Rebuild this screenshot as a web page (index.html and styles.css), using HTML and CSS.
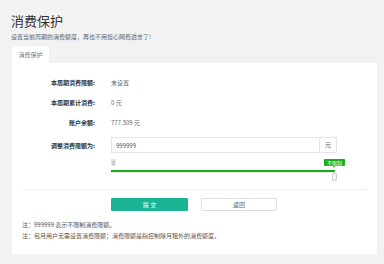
FILE: index.html
```html
<!DOCTYPE html>
<html lang="zh-CN">
<head>
    <meta charset="UTF-8">
    <meta name="viewport" content="width=device-width, initial-scale=1.0">
    <title>消费保护</title>
    <link rel="stylesheet" href="styles.css">
</head>
<body>
    <div class="page">
        <h1 class="title">消费保护</h1>
        <p class="subtitle">设置当前周期的消费额度，再也不用担心网费透支了!</p>

        <div class="tabs">
            <div class="tab active">消费保护</div>
        </div>

        <div class="panel">
            <div class="row">
                <div class="label">本周期消费限额:</div>
                <div class="value">未设置</div>
            </div>
            <div class="row">
                <div class="label">本周期累计消费:</div>
                <div class="value">0 元</div>
            </div>
            <div class="row">
                <div class="label">账户余额:</div>
                <div class="value">777.509 元</div>
            </div>
            <div class="row row-input">
                <div class="label">调整消费限额为:</div>
                <div class="input-group">
                    <input type="text" class="amount" value="999999">
                    <span class="addon">元</span>
                </div>
            </div>
            <div class="row row-slider">
                <div class="label"></div>
                <div class="slider">
                    <span class="slider-min">0</span>
                    <span class="slider-tip">不限制</span>
                    <div class="slider-track"><div class="slider-bar"></div></div>
                    <span class="slider-handle"></span>
                </div>
            </div>

            <div class="divider"></div>

            <div class="actions">
                <button class="btn btn-primary">提 交</button>
                <button class="btn btn-default">返回</button>
            </div>

            <div class="notes">
                <p>注：999999 表示不限制消费限额。</p>
                <p>注：包月用户无需设置消费限额；消费限额是指控制除月租外的消费额度。</p>
            </div>
        </div>
    </div>
</body>
</html>
```

FILE: styles.css
```css
body {
    margin: 0;
    background-color: #f2f2f2;
    font-family: "Noto Sans CJK SC", "Noto Sans", sans-serif;
    color: #555;
}
.page {
    padding: 12px 7px 10px 12px;
}
.title {
    margin: 0;
    margin-left: -1px;
    font-size: 13px;
    line-height: 18px;
    font-weight: normal;
    color: #333;
}
.subtitle {
    margin: 3px 0 0 -1px;
    font-size: 6px;
    line-height: 8px;
    color: #666;
}
.tabs {
    display: flex;
    margin-top: 5px;
}
.tab {
    width: 37px;
    height: 17px;
    line-height: 17px;
    text-align: center;
    font-size: 6px;
    color: #777;
}
.tab.active {
    background-color: #fff;
}
.panel {
    background-color: #fff;
    padding: 9px 10px 13px 10px;
}
.row {
    display: flex;
    align-items: center;
    height: 20px;
    font-size: 6px;
}
.label {
    width: 73px;
    margin-right: 16px;
    text-align: right;
    font-weight: bold;
    color: #333;
}
.value {
    color: #666;
}
.row-input {
    height: 16px;
    margin-top: 5px;
}
.input-group {
    display: flex;
    width: 226px;
    height: 16px;
}
.amount {
    width: 209px;
    height: 16px;
    box-sizing: border-box;
    border: 1px solid #e5e5e5;
    padding: 0 4px;
    font-family: inherit;
    font-size: 6px;
    color: #555;
    outline: none;
}
.addon {
    width: 17px;
    height: 16px;
    box-sizing: border-box;
    border: 1px solid #e5e5e5;
    border-left: none;
    line-height: 14px;
    text-align: center;
    color: #666;
}
.row-slider {
    height: 22px;
    margin-top: 6px;
    align-items: flex-start;
}
.slider {
    position: relative;
    width: 224px;
    height: 22px;
}
.slider-min {
    position: absolute;
    left: 0;
    top: 0;
    width: 5px;
    height: 7px;
    line-height: 7px;
    text-align: center;
    font-size: 5px;
    color: #999;
    background-color: #e6e6e6;
    border-radius: 1px;
}
.slider-tip {
    position: absolute;
    right: -10px;
    top: 0;
    width: 21px;
    height: 7px;
    line-height: 7px;
    text-align: center;
    font-size: 5px;
    color: #fff;
    background-color: #1aad19;
    border-radius: 1px;
}
.slider-tip::after {
    content: "";
    position: absolute;
    left: 9px;
    bottom: -2px;
    border-left: 1.5px solid transparent;
    border-right: 1.5px solid transparent;
    border-top: 2px solid #1aad19;
}
.slider-track {
    position: absolute;
    left: 0;
    right: 0;
    top: 11px;
    height: 3px;
    background-color: #e8e8e8;
}
.slider-bar {
    height: 2px;
    background-color: #1aad19;
}
.slider-handle {
    position: absolute;
    right: -2px;
    top: 14px;
    width: 5px;
    height: 8px;
    box-sizing: border-box;
    border: 1px solid #ccc;
    border-radius: 2px;
    background-color: #f5f5f5;
}
.divider {
    margin-top: 8px;
    height: 1px;
    background-color: #eee;
}
.actions {
    display: flex;
    gap: 13px;
    margin-top: 8px;
    padding-left: 89px;
}
.btn {
    width: 77px;
    height: 13px;
    padding: 0;
    font-family: inherit;
    font-size: 6px;
    border-radius: 1px;
    cursor: pointer;
}
.btn-primary {
    background-color: #1ab394;
    border: 1px solid #1ab394;
    color: #fff;
}
.btn-default {
    width: 76px;
    background-color: #fff;
    border: 1px solid #e0e0e0;
    color: #666;
}
.notes {
    margin-top: 8px;
}
.notes p {
    margin: 0;
    font-size: 6px;
    line-height: 11px;
    color: #555;
}
```
